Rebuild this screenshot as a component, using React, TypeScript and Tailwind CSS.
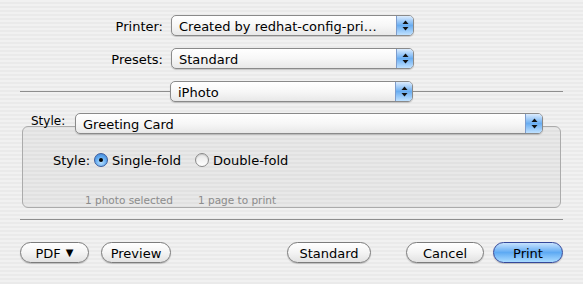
import React from 'react';

const font = "font-['DejaVu_Sans','Liberation_Sans',sans-serif]";

function Arrows() {
  return (
    <svg width="7" height="11" viewBox="0 0 7 11" className="block">
      <path d="M3.5 0.5 L6.5 4 L0.5 4 Z" fill="#111" />
      <path d="M0.5 7 L6.5 7 L3.5 10.5 Z" fill="#111" />
    </svg>
  );
}

function Popup({ label, className = '' }: { label: string; className?: string }) {
  return (
    <div
      className={`relative z-10 flex h-[21px] overflow-hidden rounded-[5px] border border-[#8a8a8a] bg-gradient-to-b from-white via-[#f7f7f7] to-[#e8e8e8] shadow-[0_1px_1px_rgba(0,0,0,0.18)] ${className}`}
    >
      <div className="flex flex-1 items-center whitespace-nowrap pl-[7px] pt-px text-[13px] leading-none text-black">{label}</div>
      <div className="flex w-[17px] items-center justify-center border-l border-[#7d9ccc] bg-gradient-to-b from-[#dcecfd] via-[#69adf1] to-[#bfe1ff]">
        <Arrows />
      </div>
    </div>
  );
}

function Button({ children, className = '', primary = false }: { children: React.ReactNode; className?: string; primary?: boolean }) {
  return (
    <div
      className={`flex h-[21px] items-center justify-center rounded-full border pt-px text-[13px] leading-none text-black shadow-[0_1px_1px_rgba(0,0,0,0.2)] ${
        primary
          ? 'border-[#35489a] bg-gradient-to-b from-[#c6e2fd] via-[#5eaaf3] to-[#a9dbff]'
          : 'border-[#7c7c7c] bg-gradient-to-b from-white via-[#f4f4f4] to-[#e2e2e2]'
      } ${className}`}
    >
      {children}
    </div>
  );
}

function Radio({ checked }: { checked?: boolean }) {
  if (checked) {
    return (
      <div className="flex h-[14px] w-[14px] items-center justify-center rounded-full border border-[#3a5c9e] bg-[radial-gradient(circle_at_50%_70%,#b9e0ff_0%,#5fa8ee_55%,#3f7fcf_100%)]">
        <div className="h-[4px] w-[4px] rounded-full bg-black" />
      </div>
    );
  }
  return (
    <div className="h-[14px] w-[14px] rounded-full border border-[#8a8a8a] bg-gradient-to-b from-[#e6e6e6] to-white shadow-[inset_0_1px_1px_rgba(0,0,0,0.15)]" />
  );
}

export default function App() {
  return (
    <div
      className={`h-[284px] w-[583px] overflow-hidden bg-[repeating-linear-gradient(180deg,#f1f1f1_0px,#f1f1f1_2px,#eaeaea_2px,#eaeaea_4px)] pt-[15px] ${font} text-black`}
    >
      {/* Printer */}
      <div className="flex items-center">
        <div className="w-[163px] pt-px text-right text-[13px] leading-none">Printer:</div>
        <Popup label="Created by redhat-config-pri…" className="ml-[8px] w-[243px]" />
      </div>

      {/* Presets */}
      <div className="mt-[12px] flex items-center">
        <div className="w-[163px] pt-px text-right text-[13px] leading-none">Presets:</div>
        <Popup label="Standard" className="ml-[8px] w-[243px]" />
      </div>

      {/* panel chooser */}
      <div className="mt-[12px] flex items-center px-[20px]">
        <div className="h-px flex-1 bg-[#8e8e8e]" />
        <Popup label="iPhoto" className="w-[243px]" />
        <div className="h-px flex-1 bg-[#8e8e8e]" />
      </div>

      {/* Style group */}
      <div className="mx-[22px] mt-[11px]">
        <div className="flex items-start">
          <div className="w-[53px] pl-[9px] pt-[2px] text-[12px] leading-none">Style:</div>
          <Popup label="Greeting Card" className="w-[468px]" />
        </div>
        <div className="-mt-[8px] h-[82px] rounded-[6px] border border-[#ababab] bg-black/[0.035] pt-[26px]">
          <div className="flex items-center text-[13px] leading-none">
            <span className="ml-[30px]">Style:</span>
            <span className="ml-[4px]"><Radio checked /></span>
            <span className="ml-[4px]">Single-fold</span>
            <span className="ml-[14px]"><Radio /></span>
            <span className="ml-[4px]">Double-fold</span>
          </div>
          <div className="mt-[28px] flex text-[10.5px] leading-none text-[#8c8c8c]">
            <span className="ml-[62px]">1 photo selected</span>
            <span className="ml-[25px]">1 page to print</span>
          </div>
        </div>
      </div>

      <div className="mx-[20px] mt-[11px] h-px bg-[#8e8e8e]" />

      {/* Buttons */}
      <div className="mt-[22px] flex px-[20px]">
        <Button className="w-[69px]">
          <span>PDF</span>
          <span className="ml-[5px] text-[10px]">▼</span>
        </Button>
        <Button className="ml-[12px] w-[70px]">Preview</Button>
        <Button className="ml-[116px] w-[84px]">Standard</Button>
        <Button className="ml-[35px] w-[78px]">Cancel</Button>
        <Button primary className="ml-[9px] w-[70px]">Print</Button>
      </div>
    </div>
  );
}
